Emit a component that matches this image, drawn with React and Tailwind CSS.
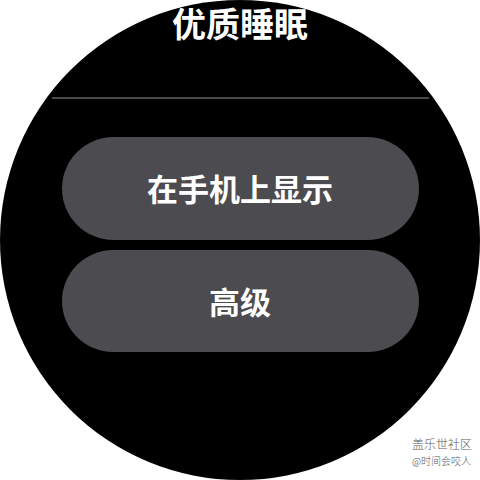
export default function App() {
  return (
    <div
      className="relative w-[480px] h-[480px] bg-white overflow-hidden"
      style={{ fontFamily: '"Noto Sans CJK SC", "Noto Sans", sans-serif' }}
    >
      <div className="w-[480px] h-[480px] rounded-full bg-black flex flex-col items-center">
        <div className="pt-[6px] text-[34px] leading-[34px] font-bold text-white">优质睡眠</div>
        <div className="mt-[57px] w-[377px] h-[2px] bg-[#4a4a4a]"></div>
        <div className="mt-[38px] flex flex-col gap-[10px]">
          <button className="w-[357px] h-[103px] rounded-full bg-[#4c4b50] text-white text-[31px] font-bold flex items-center justify-center">
            在手机上显示
          </button>
          <button className="w-[357px] h-[102px] rounded-full bg-[#4c4b50] text-white text-[31px] font-bold flex items-center justify-center">
            高级
          </button>
        </div>
      </div>
      <div className="absolute left-[412px] top-[436px] flex flex-col items-start">
        <div className="text-[12px] leading-[16px] text-[#5a5a5a] font-light tracking-[0px]">盖乐世社区</div>
        <div className="text-[10px] leading-[14px] mt-[2px] text-[#5a5a5a] font-light">@时间会咬人</div>
      </div>
    </div>
  );
}
